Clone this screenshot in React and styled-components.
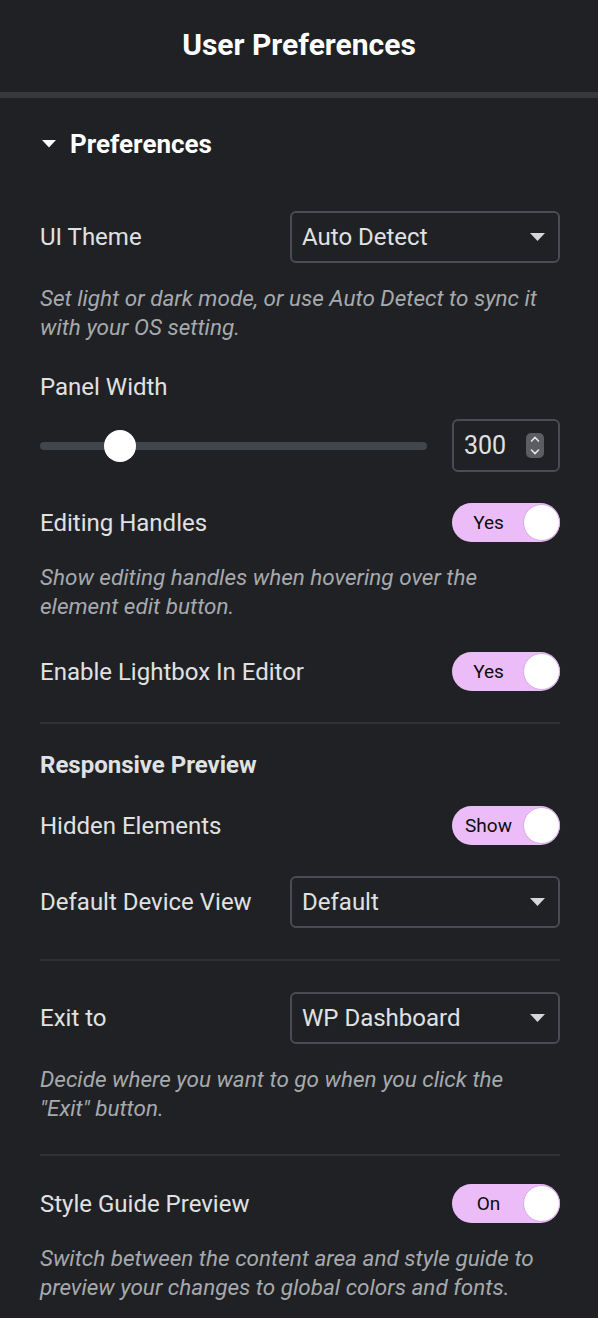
import React from "react";
import styled, { createGlobalStyle } from "styled-components";

const GlobalStyle = createGlobalStyle`
  html, body {
    margin: 0;
    padding: 0;
    background: #1f2124;
  }
  body {
    font-family: Roboto, "Liberation Sans", Arial, sans-serif;
    -webkit-font-smoothing: antialiased;
  }
`;

const Panel = styled.div`
  width: 598px;
  min-height: 1318px;
  background: #1f2124;
  color: #e0e1e3;
`;

const Header = styled.header`
  box-sizing: border-box;
  height: 98px;
  padding-bottom: 4px;
  display: flex;
  align-items: center;
  justify-content: center;
  border-bottom: 6px solid #36383c;
  h1 {
    margin: 0;
    font-size: 30px;
    font-weight: 700;
    color: #ffffff;
  }
`;

const Body = styled.div`
  padding: 0 38px 0 40px;
`;

const SectionTitle = styled.div`
  display: flex;
  align-items: center;
  gap: 14px;
  padding-top: 31px;
  height: 30px;
  margin-bottom: 52px;
  font-size: 26px;
  font-weight: 700;
  color: #ffffff;
  svg {
    margin-left: 2px;
  }
`;

const List = styled.div`
  display: flex;
  flex-direction: column;
  gap: 31px;
`;

const Field = styled.div`
  display: flex;
  flex-direction: column;
  margin-top: ${(p) => p.$mt || 0}px;
`;

const Row = styled.div`
  display: flex;
  align-items: center;
  justify-content: space-between;
  height: ${(p) => p.$h || 39}px;
`;

const Label = styled.span`
  font-size: 24px;
  line-height: 28px;
  color: #e0e1e3;
`;

const SubHeading = styled.div`
  font-size: 24px;
  line-height: 20px;
  font-weight: 700;
  color: #e0e1e3;
`;

const Description = styled.p`
  margin: 21px 0 0;
  font-size: 22.5px;
  line-height: 29px;
  font-style: italic;
  color: #a6a9ad;
`;

const NoWrap = styled.span`
  white-space: nowrap;
`;

const SelectBox = styled.div`
  box-sizing: border-box;
  width: 270px;
  height: 52px;
  border: 2px solid #4a4c51;
  border-radius: 6px;
  display: flex;
  align-items: center;
  justify-content: space-between;
  padding: 0 13px 0 10px;
  font-size: 24px;
  color: #e0e1e3;
`;

const Divider = styled.hr`
  margin: 0;
  border: 0;
  height: 2px;
  background: #2f3135;
`;

const SliderRow = styled.div`
  margin-top: 18px;
  display: flex;
  align-items: center;
  gap: 25px;
  height: 53px;
`;

const Track = styled.div`
  position: relative;
  flex: 1;
  height: 8px;
  border-radius: 4px;
  background: #41454c;
`;

const Thumb = styled.span`
  position: absolute;
  top: 50%;
  width: 32px;
  height: 32px;
  margin: -16px 0 0 -16px;
  border-radius: 50%;
  background: #ffffff;
`;

const NumberBox = styled.div`
  box-sizing: border-box;
  width: 108px;
  height: 53px;
  border: 2px solid #4a4c51;
  border-radius: 6px;
  display: flex;
  align-items: center;
  justify-content: space-between;
  padding: 0 14px 0 10px;
  font-size: 25px;
  color: #e0e1e3;
`;

const Spinner = styled.span`
  width: 18px;
  height: 25px;
  border-radius: 5px;
  background: #5b5d62;
  display: flex;
  flex-direction: column;
  align-items: center;
  justify-content: space-around;
`;

const Switch = styled.div`
  box-sizing: border-box;
  width: 108px;
  height: 39px;
  border-radius: 20px;
  background: #ebbcf8;
  display: flex;
  align-items: center;
  span {
    flex: 1;
    text-align: center;
    font-size: 19px;
    color: #0c0d0e;
    padding-left: 2px;
  }
  i {
    box-sizing: border-box;
    width: 37px;
    height: 37px;
    border-radius: 50%;
    background: #ffffff;
    border: 1px solid #d7a8ea;
  }
`;

const Caret = ({ size = 15, color = "#d5d6d9" }) => (
  <svg width={size} height={size / 2 + 0.5} viewBox="0 0 16 8.5">
    <path d="M0 0h16L8 8.5z" fill={color} />
  </svg>
);

const Select = ({ value }) => (
  <SelectBox>
    <span>{value}</span>
    <Caret />
  </SelectBox>
);

const Toggle = ({ text }) => (
  <Switch>
    <span>{text}</span>
    <i />
  </Switch>
);

const Chevron = ({ up }) => (
  <svg width="10" height="6" viewBox="0 0 10 6">
    <path
      d={up ? "M1.5 5L5 1.5 8.5 5" : "M1.5 1L5 4.5 8.5 1"}
      stroke="#e3e4e6"
      strokeWidth="1.6"
      fill="none"
      strokeLinecap="round"
    />
  </svg>
);

const App = () => {
  const sliderPos = 20.7;
  return (
    <Panel>
      <GlobalStyle />
      <Header>
        <h1>User Preferences</h1>
      </Header>
      <Body>
        <SectionTitle>
          <Caret size={14} color="#ffffff" />
          Preferences
        </SectionTitle>
        <List>
          <Field>
            <Row $h={52}>
              <Label>UI Theme</Label>
              <Select value="Auto Detect" />
            </Row>
            <Description>
              Set light or dark mode, or use Auto Detect to sync it with your OS setting.
            </Description>
          </Field>
          <Field>
            <Label>Panel Width</Label>
            <SliderRow>
              <Track>
                <Thumb style={{ left: `${sliderPos}%` }} />
              </Track>
              <NumberBox>
                <span>300</span>
                <Spinner>
                  <Chevron up />
                  <Chevron />
                </Spinner>
              </NumberBox>
            </SliderRow>
          </Field>
          <Field>
            <Row>
              <Label>Editing Handles</Label>
              <Toggle text="Yes" />
            </Row>
            <Description>
              Show editing handles when hovering over the element edit button.
            </Description>
          </Field>
          <Row>
            <Label>Enable Lightbox In Editor</Label>
            <Toggle text="Yes" />
          </Row>
          <Divider />
          <SubHeading>Responsive Preview</SubHeading>
          <Row>
            <Label>Hidden Elements</Label>
            <Toggle text="Show" />
          </Row>
          <Row $h={52}>
            <Label>Default Device View</Label>
            <Select value="Default" />
          </Row>
          <Divider />
          <Field>
            <Row $h={52}>
              <Label>Exit to</Label>
              <Select value="WP Dashboard" />
            </Row>
            <Description>
              Decide where you want to go when you click the <NoWrap>"Exit" button.</NoWrap>
            </Description>
          </Field>
          <Divider />
          <Field $mt={-3}>
            <Row>
              <Label>Style Guide Preview</Label>
              <Toggle text="On" />
            </Row>
            <Description>
              Switch between the content area and style guide to preview your changes to global colors and fonts.
            </Description>
          </Field>
        </List>
      </Body>
    </Panel>
  );
};

export default App;
